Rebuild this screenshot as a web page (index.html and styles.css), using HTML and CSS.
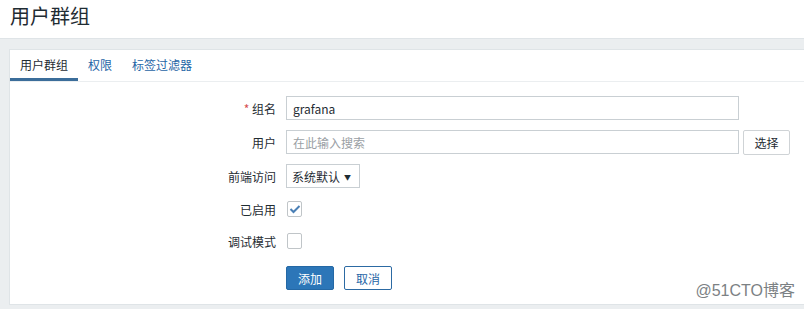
FILE: index.html
```html
<!DOCTYPE html>
<html lang="zh-CN">

<head>
	<meta charset="UTF-8">
	<meta name="viewport" content="width=device-width, initial-scale=1.0">
	<title>用户群组</title>
	<link rel="stylesheet" href="styles.css">
</head>

<body>

	<div class="header">
		<h1>用户群组</h1>
	</div>

	<div class="card">
		<ul class="tabs">
			<li class="tab active">用户群组</li>
			<li class="tab">权限</li>
			<li class="tab">标签过滤器</li>
		</ul>

		<form class="form">
			<div class="row">
				<label class="label"><span class="req">*</span> 组名</label>
				<input class="text" type="text" value="grafana">
			</div>
			<div class="row">
				<label class="label">用户</label>
				<input class="text" type="text" placeholder="在此输入搜索">
				<button type="button" class="btn-select">选择</button>
			</div>
			<div class="row">
				<label class="label">前端访问</label>
				<div class="select">系统默认<span class="arrow">▼</span></div>
			</div>
			<div class="row short">
				<label class="label">已启用</label>
				<span class="check">
					<svg width="12" height="10" viewBox="0 0 12 10"><path d="M1.5 5 L4.5 8 L10.5 2" fill="none" stroke="#4a7fb5" stroke-width="2"/></svg>
				</span>
			</div>
			<div class="row short">
				<label class="label">调试模式</label>
				<span class="check"></span>
			</div>
			<div class="row buttons">
				<span class="label"></span>
				<button type="button" class="btn-primary">添加</button>
				<button type="button" class="btn-cancel">取消</button>
			</div>
		</form>

		<div class="watermark">@51CTO博客</div>
	</div>

</body>

</html>
```

FILE: styles.css
```css
body {
	margin: 0;
	background-color: #ebeef0;
	font-family: 'Noto Sans CJK SC', 'Liberation Sans', sans-serif;
	font-size: 12px;
	color: #1f2c33;
}

.header {
	height: 38px;
	background-color: #fff;
	border-bottom: 1px solid #dfe4e7;
	padding-left: 10px;
}

.header h1 {
	margin: 0;
	font-size: 20px;
	font-weight: normal;
	line-height: 32px;
}

.card {
	position: relative;
	margin: 10px 0 0 9px;
	height: 254px;
	background-color: #fff;
	border: 1px solid #dfe4e7;
	border-right: none;
}

.tabs {
	list-style: none;
	margin: 0;
	padding: 0;
	display: flex;
	height: 31px;
	border-bottom: 1px solid #ebeef0;
}

.tab {
	padding: 0 10px;
	line-height: 29px;
	color: #1f65a6;
	border-bottom: 3px solid transparent;
	height: 28px;
}

.tab.active {
	color: #1f2c33;
	border-bottom-color: #3b6d9a;
}

.form {
	padding-top: 14px;
	display: flex;
	flex-direction: column;
	gap: 10px;
}

.row {
	display: flex;
	align-items: center;
	height: 24px;
	gap: 10px;
}

.row.short {
	height: 22px;
}

.row.buttons {
	margin-top: 4px;
}

.label {
	width: 266px;
	text-align: right;
	flex-shrink: 0;
}

.req {
	color: #d64e4e;
}

.text {
	box-sizing: border-box;
	width: 453px;
	height: 24px;
	border: 1px solid #c9cfd3;
	padding: 0 6px;
	font-family: inherit;
	font-size: 12px;
	color: #1f2c33;
	outline: none;
}

.text::placeholder {
	color: #9aa0a4;
}

.btn-select {
	margin-left: -6px;
	box-sizing: border-box;
	width: 47px;
	height: 25px;
	background-color: #fff;
	border: 1px solid #cfd3d6;
	border-radius: 2px;
	font-family: inherit;
	font-size: 12px;
	color: #1f2c33;
	padding: 0;
}

.select {
	box-sizing: border-box;
	width: 74px;
	height: 24px;
	border: 1px solid #c9cfd3;
	padding: 0 8px 0 5px;
	line-height: 24px;
	display: flex;
	justify-content: space-between;
}

.arrow {
	font-size: 7px;
	color: #1f2c33;
}

.check {
	box-sizing: border-box;
	width: 15px;
	height: 16px;
	margin-left: 1px;
	border: 1px solid #c0c5c8;
	border-radius: 2px;
	display: flex;
	justify-content: center;
	align-items: center;
}

.btn-primary,
.btn-cancel {
	box-sizing: border-box;
	width: 48px;
	height: 24px;
	border-radius: 2px;
	font-family: inherit;
	font-size: 12px;
	padding: 0;
}

.btn-primary {
	background-color: #2c76b8;
	border: 1px solid #2468a5;
	color: #fff;
}

.btn-cancel {
	background-color: #fff;
	border: 1px solid #2c6aa3;
	color: #1f65a6;
}

.watermark {
	position: absolute;
	right: 9px;
	bottom: 3px;
	font-size: 16px;
	color: #7c8184;
	font-family: 'Liberation Sans', 'Noto Sans CJK SC', sans-serif;
}
```
